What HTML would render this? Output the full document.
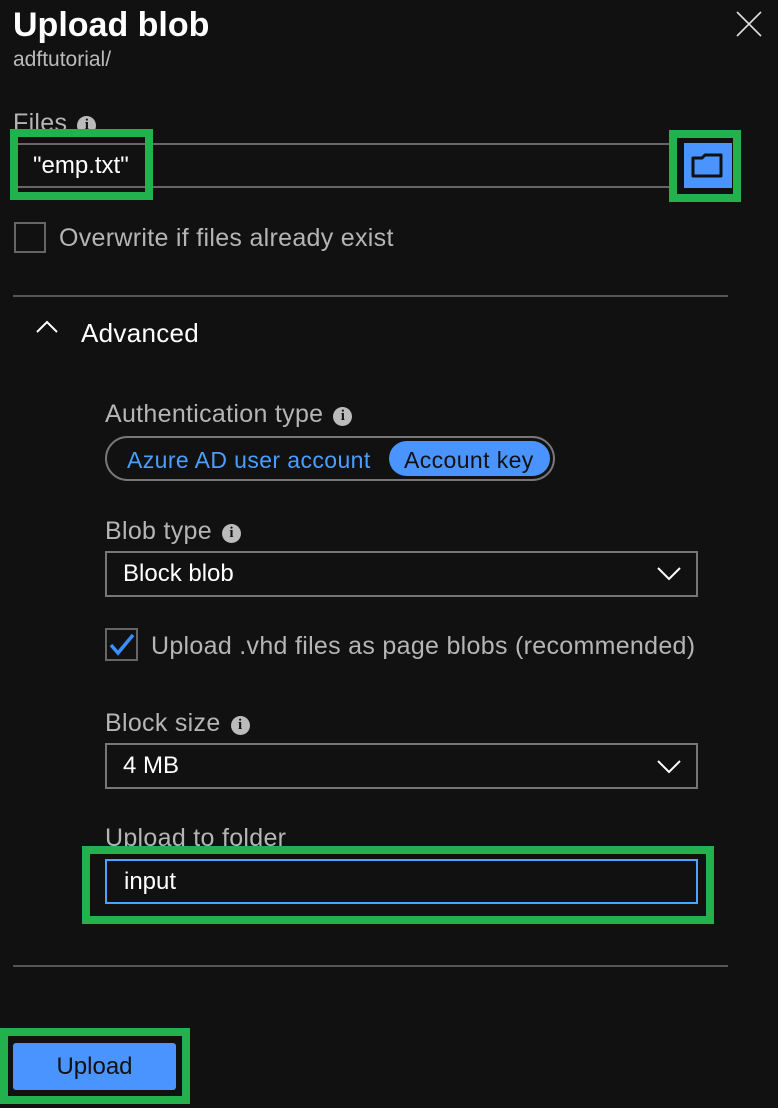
<!DOCTYPE html>
<html><head><meta charset="utf-8"><style>
*{margin:0;padding:0;box-sizing:border-box}
body{width:778px;height:1108px;background:#111;position:relative;overflow:hidden;font-family:"Liberation Sans",sans-serif;color:#ddd}
.a{position:absolute;white-space:nowrap}
.lbl{font-size:25px;color:#b5b5b5;line-height:28px;letter-spacing:0.3px}
.info{display:inline-block;width:19px;height:19px;border-radius:50%;background:#bbb;color:#111;font-size:15px;font-weight:bold;text-align:center;line-height:19px;font-family:"Liberation Serif",serif;vertical-align:2px;margin-left:10px;letter-spacing:0}
.green{position:absolute;border:8px solid #22b14c}
.sel{position:absolute;border:2px solid #777;font-size:24px;color:#fff;padding-left:16px;line-height:42px}
.t{font-size:24px;line-height:28px}
</style></head><body>
<div class="a" style="left:13px;top:4px;font-size:34px;line-height:42px;font-weight:bold;color:#fff">Upload blob</div>
<div class="a" style="left:13px;top:48px;font-size:21px;line-height:24px;color:#bbb">adftutorial/</div>
<svg class="a" style="left:736px;top:11px" width="26" height="26"><path d="M1 1L25 25M25 1L1 25" stroke="#ddd" stroke-width="1.6"/></svg>

<div class="a lbl" style="left:13px;top:109px">Files<span class="info">i</span></div>
<div class="a" style="left:14px;top:143px;width:655px;height:45px;border:2px solid #666;border-right:none"></div>
<div class="a t" style="left:33px;top:152px;color:#fff">"emp.txt"</div>
<div class="green" style="left:10px;top:129px;width:143px;height:71px"></div>
<div class="a" style="left:684px;top:143px;width:48px;height:45px;background:#4a94ff"></div>
<svg class="a" style="left:690px;top:152px" width="34" height="28"><path d="M3 6h9l3-3h16v21H3z" fill="#4a94ff" stroke="#111" stroke-width="3" stroke-linejoin="round"/></svg>
<div class="green" style="left:669px;top:130px;width:72px;height:72px"></div>

<div class="a" style="left:14px;top:222px;width:32px;height:31px;border:2px solid #666"></div>
<div class="a lbl" style="left:59px;top:224px">Overwrite if files already exist</div>
<div class="a" style="left:13px;top:295px;width:715px;height:2px;background:#555"></div>

<svg class="a" style="left:36px;top:320px" width="22" height="14"><path d="M1 12L11 2L21 12" stroke="#fff" stroke-width="2" fill="none"/></svg>
<div class="a" style="left:81px;top:318px;font-size:26px;line-height:30px;color:#fff;letter-spacing:0.3px">Advanced</div>

<div class="a lbl" style="left:105px;top:400px">Authentication type<span class="info">i</span></div>
<div class="a" style="left:105px;top:436px;width:450px;height:45px;border:2px solid #777;border-radius:23px"></div>
<div class="a t" style="left:127px;top:446px;color:#4a9eff;font-size:23px;letter-spacing:0.4px">Azure AD user account</div>
<div class="a" style="left:389px;top:441px;width:161px;height:35px;border-radius:18px;background:#4a94ff"></div>
<div class="a t" style="left:404px;top:446px;color:#111;font-size:23px;letter-spacing:0.4px">Account key</div>

<div class="a lbl" style="left:105px;top:517px">Blob type<span class="info">i</span></div>
<div class="sel" style="left:105px;top:551px;width:593px;height:46px">Block blob</div>
<svg class="a" style="left:657px;top:567px" width="24" height="14"><path d="M1 1L12 12L23 1" stroke="#fff" stroke-width="2" fill="none"/></svg>

<div class="a" style="left:105px;top:628px;width:33px;height:33px;border:2px solid #666"></div>
<svg class="a" style="left:108px;top:632px" width="28" height="26"><path d="M3 13L10 21L25 3" stroke="#3a8fff" stroke-width="3.5" fill="none"/></svg>
<div class="a lbl" style="left:151px;top:632px">Upload .vhd files as page blobs (recommended)</div>

<div class="a lbl" style="left:105px;top:709px">Block size<span class="info">i</span></div>
<div class="sel" style="left:105px;top:743px;width:593px;height:46px">4 MB</div>
<svg class="a" style="left:657px;top:760px" width="24" height="14"><path d="M1 1L12 12L23 1" stroke="#fff" stroke-width="2" fill="none"/></svg>

<div class="a lbl" style="left:105px;top:824px">Upload to folder</div>
<div class="a" style="left:105px;top:859px;width:593px;height:45px;border:2px solid #4aa3ff"></div>
<div class="a t" style="left:124px;top:868px;color:#fff">input</div>
<div class="green" style="left:82px;top:846px;width:632px;height:78px"></div>

<div class="a" style="left:13px;top:965px;width:715px;height:2px;background:#555"></div>

<div class="a" style="left:13px;top:1043px;width:163px;height:47px;background:#4a94ff;border-radius:3px;color:#111;font-size:24px;text-align:center;line-height:47px">Upload</div>
<div class="green" style="left:0px;top:1028px;width:190px;height:76px"></div>
</body></html>
